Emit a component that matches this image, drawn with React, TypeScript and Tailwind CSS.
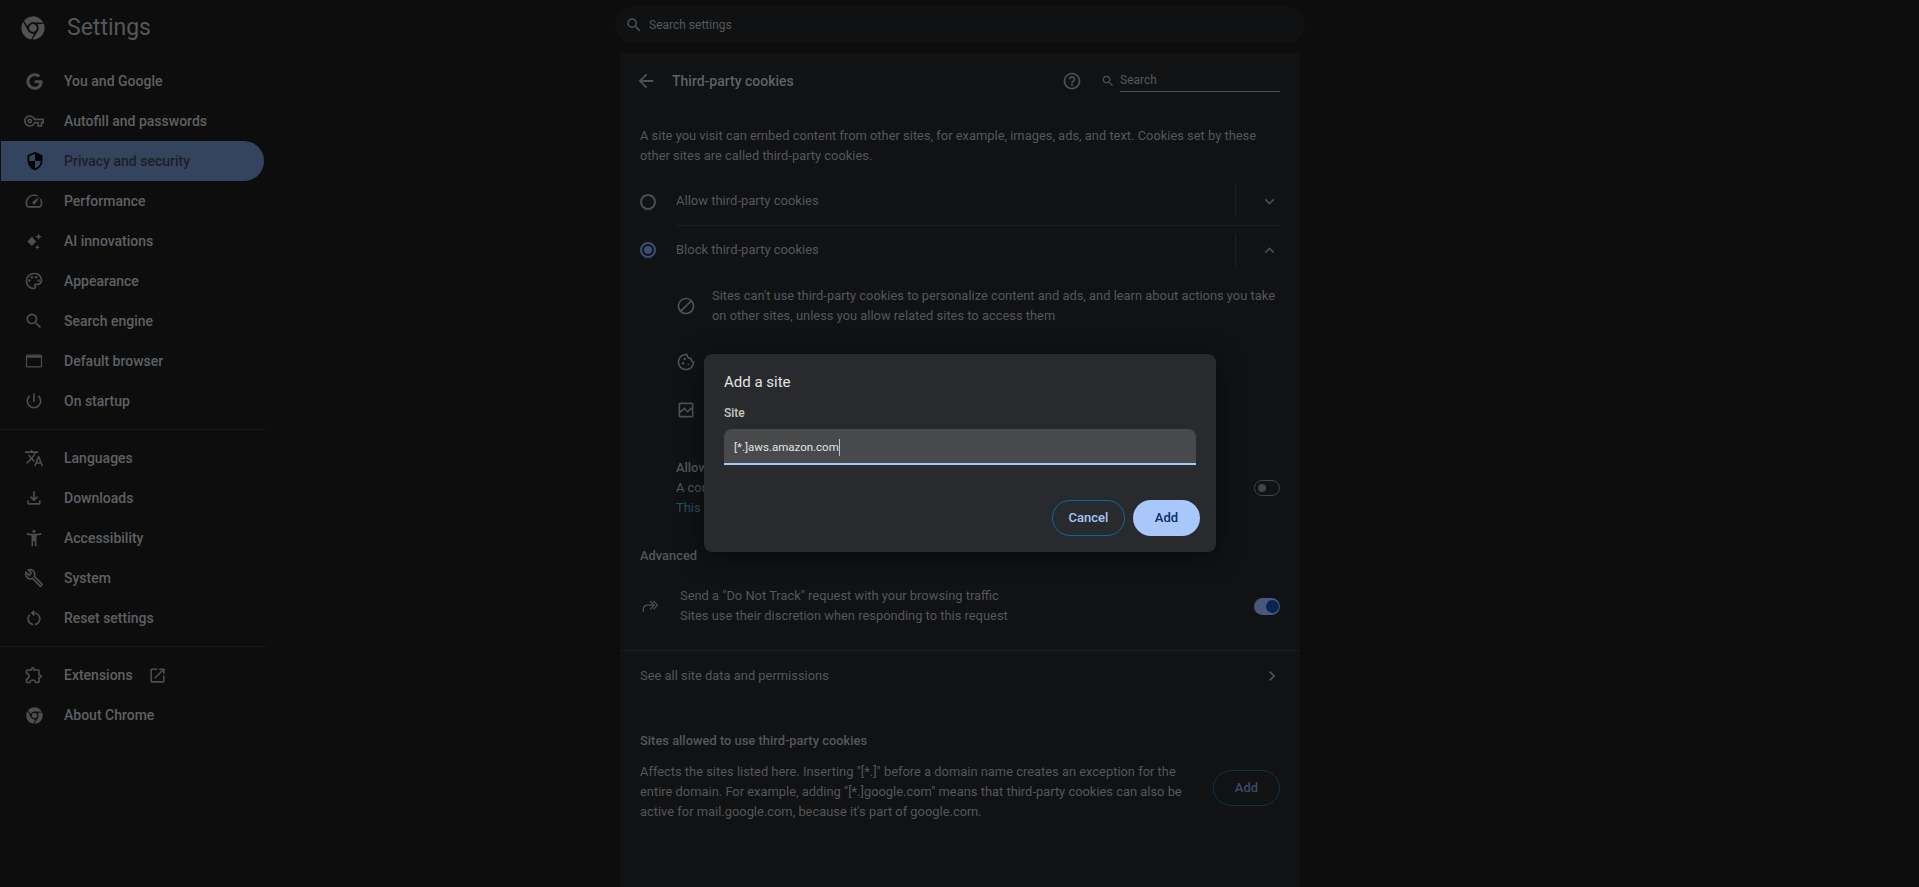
import React from "react";
import { FaChrome, FaGoogle } from "react-icons/fa";
import {
  MdArrowBack, MdBlock, MdChevronRight, MdExpandLess, MdExpandMore, MdOutlineAccessibilityNew,
  MdOutlineBrokenImage, MdOutlineBuild, MdOutlineCookie, MdOutlineExtension, MdOutlineFileDownload,
  MdOutlineHelpOutline, MdOutlineOpenInNew, MdOutlinePalette, MdOutlinePowerSettingsNew, MdOutlineRestartAlt,
  MdOutlineSpeed, MdOutlineVpnKey, MdSearch, MdSecurity, MdTranslate,
} from "react-icons/md";

const Sparkle = ({ className }: { className?: string }) => (
  <svg viewBox="0 0 24 24" className={className} fill="currentColor">
    <path d="M9.5 7l5.2 5.5-5.2 5.5-5.5-5.5zM17.5 3l1.2 2.8 2.8 1.2-2.8 1.2-1.2 2.8-1.2-2.8-2.8-1.2 2.8-1.2zM16 16.5l.9 2.1 2.1.9-2.1.9-.9 2.1-.9-2.1-2.1-.9 2.1-.9z" />
  </svg>
);
const Browser = ({ className }: { className?: string }) => (
  <svg viewBox="0 0 24 24" className={className} fill="none" stroke="currentColor">
    <rect x="3" y="5" width="18" height="14" rx="1.5" strokeWidth="1.5" />
    <path d="M3 7h18" strokeWidth="2" />
  </svg>
);
const DoubleForward = ({ className }: { className?: string }) => (
  <svg viewBox="0 0 24 24" className={className} fill="none" stroke="currentColor" strokeWidth="1.5">
    <path d="M4 19v-3c0-3 2-5 5-5h8M12 6l5 5-5 5M16 6l5 5-5 5" />
  </svg>
);

type Item = { label: string; Icon: React.ComponentType<{ className?: string }>; active?: boolean; small?: boolean; ext?: boolean };
const group1: Item[] = [
  { label: "You and Google", Icon: FaGoogle, small: true },
  { label: "Autofill and passwords", Icon: MdOutlineVpnKey },
  { label: "Privacy and security", Icon: MdSecurity, active: true },
  { label: "Performance", Icon: MdOutlineSpeed },
  { label: "AI innovations", Icon: Sparkle },
  { label: "Appearance", Icon: MdOutlinePalette },
  { label: "Search engine", Icon: MdSearch },
  { label: "Default browser", Icon: Browser },
  { label: "On startup", Icon: MdOutlinePowerSettingsNew },
];
const group2: Item[] = [
  { label: "Languages", Icon: MdTranslate },
  { label: "Downloads", Icon: MdOutlineFileDownload },
  { label: "Accessibility", Icon: MdOutlineAccessibilityNew },
  { label: "System", Icon: MdOutlineBuild },
  { label: "Reset settings", Icon: MdOutlineRestartAlt },
];
const group3: Item[] = [
  { label: "Extensions", Icon: MdOutlineExtension, ext: true },
  { label: "About Chrome", Icon: FaChrome, small: true },
];

function NavRow({ item }: { item: Item }) {
  const { Icon } = item;
  return (
    <div className={`flex h-10 items-center ${item.active ? "ml-px mr-[2px] rounded-r-[20px] bg-[#35445e] text-[#1b2027]" : "text-[#5e6063]"}`}>
      <div className={`flex items-center justify-center ${item.active ? "w-[63px] pl-[4px]" : "w-16 pl-[4px]"}`}>
        <Icon className={`${item.small ? "h-[17px] w-[17px]" : "h-5 w-5"} ${item.active ? "text-black" : "text-[#4b4d4f]"}`} />
      </div>
      <span className="text-[14px] font-medium">{item.label}</span>
      {item.ext && <MdOutlineOpenInNew className="ml-[15px] h-[19px] w-[19px] text-[#4b4d4f]" />}
    </div>
  );
}

const Radio = ({ on }: { on?: boolean }) => (
  <div className={`flex h-4 w-4 items-center justify-center rounded-full border-2 ${on ? "border-[#3d4e73]" : "border-[#4b4d50]"}`}>
    {on && <div className="h-2 w-2 rounded-full bg-[#3d4e73]" />}
  </div>
);

function RadioRow({ label, on, open, last }: { label: string; on?: boolean; open?: boolean; last?: boolean }) {
  return (
    <div className={`flex items-center ${last ? "h-[48px]" : "h-[49px]"}`}>
      <div className="w-9"><Radio on={on} /></div>
      <div className={`flex h-full flex-1 items-center ${last ? "" : "border-b border-[#1a1c1e]"}`}>
        <span className="flex-1 text-[13px]">{label}</span>
        <div className="flex h-8 w-[45px] items-center justify-end border-l border-[#1c1e20] pr-[1px]">
          {open ? <MdExpandLess className="h-[19px] w-[19px] text-[#4b4d4f]" /> : <MdExpandMore className="h-[19px] w-[19px] text-[#4b4d4f]" />}
        </div>
      </div>
    </div>
  );
}

export default function App() {
  return (
    <div className="relative flex h-screen w-full flex-col overflow-hidden bg-[#0d0d0e] font-['Roboto','Liberation_Sans',sans-serif] text-[#55575a]">
      <header className="flex h-[53px] shrink-0 items-start">
        <div className="flex w-[615px] items-center pl-[21px] pt-[14px]">
          <FaChrome className="h-6 w-6 text-[#4f5153]" />
          <span className="ml-[22px] text-[23px] leading-7 text-[#55575a]">Settings</span>
        </div>
        <div className="mt-[7px] flex h-9 w-[690px] items-center rounded-[18px] bg-[#101113] pl-[10px] text-[12px] text-[#55575a]">
          <MdSearch className="h-[18px] w-[18px] text-[#4f5153]" />
          <span className="ml-[6px]">Search settings</span>
        </div>
      </header>
      <div className="flex min-h-0 flex-1">
        <aside className="w-[266px] shrink-0 pt-2">
          {group1.map((i) => <NavRow key={i.label} item={i} />)}
          <div className="my-2 h-px bg-[#18191a]" />
          {group2.map((i) => <NavRow key={i.label} item={i} />)}
          <div className="my-2 h-px bg-[#18191a]" />
          {group3.map((i) => <NavRow key={i.label} item={i} />)}
        </aside>
        <main className="ml-[354px] w-[680px] shrink-0 bg-[#101214] text-[12.9px] leading-5">
          <div className="flex h-[56px] items-center px-5">
            <MdArrowBack className="-ml-[5px] h-[22px] w-[22px] text-[#4f5153]" />
            <span className="ml-[15px] flex-1 text-[14px] font-medium text-[#5f6164]">Third-party cookies</span>
            <MdOutlineHelpOutline className="mr-[19px] h-5 w-5 text-[#4f5153]" />
            <MdSearch className="mr-[5px] h-[14px] w-[14px] text-[#4f5153]" />
            <div className="h-[22px] w-40 border-b border-[#4f5153] text-[12px] leading-[20px]">Search</div>
          </div>
          <div className="px-5 pt-[17px]">
            <p>A site you visit can embed content from other sites, for example, images, ads, and text. Cookies set by these other sites are called third-party cookies.</p>
            <div className="mt-[11px]">
              <RadioRow label="Allow third-party cookies" />
              <RadioRow label="Block third-party cookies" on open last />
            </div>
            <div className="flex items-center pl-9 pt-[12px]">
              <div className="w-9 shrink-0"><MdBlock className="h-5 w-5 text-[#4f5153]" /></div>
              <p>Sites can't use third-party cookies to personalize content and ads, and learn about actions you take on other sites, unless you allow related sites to access them</p>
            </div>
            <div className="mt-[26px] pl-9"><MdOutlineCookie className="h-5 w-5 text-[#4f5153]" /></div>
            <div className="mt-[28px] pl-9"><MdOutlineBrokenImage className="h-5 w-5 text-[#4f5153]" /></div>
            <div className="mt-[38px] flex items-center pl-9">
              <div className="flex-1">
                <div className="font-medium">Allow related sites</div>
                <div>A company can define</div>
                <div className="text-[#2a4f60]">This is off in Incognito</div>
              </div>
              <div className="flex h-4 w-[26px] items-center rounded-full border border-[#414345] pl-[3px]">
                <div className="h-2 w-2 rounded-full bg-[#414345]" />
              </div>
            </div>
            <div className="mt-[28px] font-medium">Advanced</div>
            <div className="mt-[20px] flex items-center">
              <div className="w-10"><DoubleForward className="h-5 w-5 text-[#4f5153]" /></div>
              <div className="flex-1">
                <div>Send a "Do Not Track" request with your browsing traffic</div>
                <div>Sites use their discretion when responding to this request</div>
              </div>
              <div className="flex h-[17px] w-[26px] items-center justify-end rounded-full bg-[#47587a] pr-[1px]">
                <div className="h-[13px] w-[13px] rounded-full bg-[#0a2452]" />
              </div>
            </div>
          </div>
          <div className="mt-[24px] flex h-[51px] items-center border-t border-[#1a1c1e] px-5">
            <span className="flex-1">See all site data and permissions</span>
            <MdChevronRight className="-mr-[2px] h-5 w-5 text-[#4f5153]" />
          </div>
          <div className="px-5 pt-[30px]">
            <div className="font-medium">Sites allowed to use third-party cookies</div>
            <div className="mt-[11px] flex items-start">
              <p className="w-[560px]">Affects the sites listed here. Inserting "[*.]" before a domain name creates an exception for the entire domain. For example, adding "[*.]google.com" means that third-party cookies can also be active for mail.google.com, because it's part of google.com.</p>
              <div className="ml-auto mt-[8px] flex h-9 w-[67px] items-center justify-center rounded-full border border-[#123246] text-[13px] font-medium text-[#3b4a66]">Add</div>
            </div>
          </div>
        </main>
      </div>

      <div className="absolute left-[704px] top-[354px] w-[512px] rounded-lg bg-[#292a2d] px-5 pb-4 pt-[18px] shadow-[0_4px_24px_rgba(0,0,0,0.5)]">
        <div className="text-[15px] leading-[20px] text-[#e3e3e3]">Add a site</div>
        <div className="mt-[13px] text-[12px] font-medium leading-4 text-[#c7c7c7]">Site</div>
        <div className="mt-2 flex h-9 items-center rounded-t-lg border-b-2 border-[#a8c7fa] bg-[#47494a] pl-[10px] pt-[3px] text-[11.5px] text-[#e3e3e3]">
          <span>[*.]aws.amazon.com</span>
          <span className="h-[17px] w-px bg-[#a8c7fa]" />
        </div>
        <div className="-mr-1 mt-[35px] flex justify-end gap-2 text-[13px] font-medium">
          <div className="flex h-9 w-[73px] items-center justify-center rounded-full border border-[#0a6a9c] text-[#a8c7fa]">Cancel</div>
          <div className="flex h-9 w-[67px] items-center justify-center rounded-full bg-[#a8c7fa] text-[#062e6f]">Add</div>
        </div>
      </div>
    </div>
  );
}
